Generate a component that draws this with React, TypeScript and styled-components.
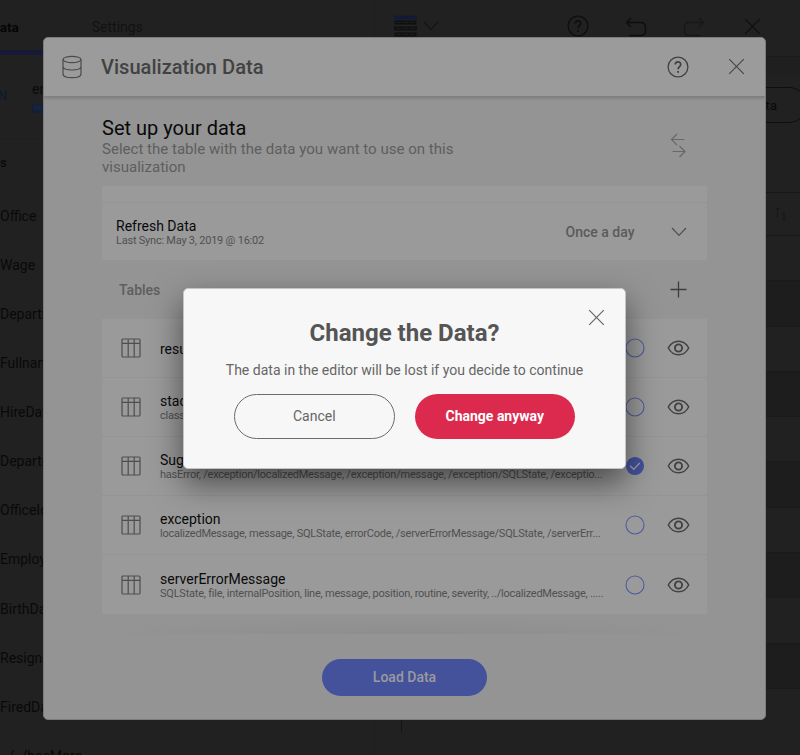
import React from "react";
import styled, { createGlobalStyle } from "styled-components";

const GlobalStyle = createGlobalStyle`
  * { box-sizing: border-box; }
  html, body { margin: 0; background: #212121; overflow: hidden; }
  body { font-family: Roboto, "Liberation Sans", sans-serif; }
  button { font-family: inherit; cursor: pointer; }
  svg { display: block; flex: none; }
`;

const Screen = styled.div`
  position: relative;
  width: 800px;
  height: 755px;
  overflow: hidden;
  display: flex;
  background: #212121;
  color: #090909;
`;

const FieldsPanel = styled.aside`
  width: 375px;
  flex: none;
  border-right: 1px solid #1e1e1e;
  overflow: hidden;
`;

const EditorTabs = styled.nav`
  display: flex;
  height: 55px;
`;

const EditorTab = styled.div<{ $active?: boolean }>`
  width: ${(p) => (p.$active ? 72 : 303)}px;
  padding: ${(p) => (p.$active ? "19px 0 0" : "19px 0 0 20px")};
  border-bottom: ${(p) => (p.$active ? "5px solid #161a36" : "0")};
  font-size: ${(p) => (p.$active ? 13.5 : 14)}px;
  line-height: 16px;
  font-weight: ${(p) => (p.$active ? 700 : 400)};
  color: ${(p) => (p.$active ? "#050505" : "#121212")};
`;

const TabText = styled.span<{ $shift: number }>`
  display: block;
  margin-left: ${(p) => p.$shift}px;
  white-space: nowrap;
`;

const SourceRow = styled.div`
  display: flex;
  height: 84px;
  padding-top: 26px;
  border-bottom: 1px solid #1e1e1e;
`;

const SourceType = styled.div`
  width: 32px;
  margin-left: -2px;
  padding-top: 7px;
  font-size: 13px;
  line-height: 16px;
  color: #0e1830;
`;

const SourceName = styled.div`
  margin-left: 2px;
  font-size: 14px;
  line-height: 16px;
`;

const SourceTag = styled.div`
  margin: 7px 0 0 2px;
  padding-left: 2px;
  width: 30px;
  height: 9px;
  border-radius: 1px;
  background: #121f38;
  color: #222c3e;
  font-size: 7px;
  line-height: 9px;
`;

const FieldsHeading = styled.div`
  height: 52px;
  padding-top: 15px;
  font-size: 13px;
  line-height: 18px;
  font-weight: 500;
`;

const Field = styled.div`
  height: 49.13px;
  display: flex;
  align-items: center;
  font-size: 14px;
  white-space: nowrap;
`;

const LastField = styled(Field)`
  align-items: flex-start;
  padding: 17px 0 0 1px;
  line-height: 16px;
`;

const Canvas = styled.section`
  flex: 1;
  display: flex;
  flex-direction: column;
`;

const CanvasToolbar = styled.header`
  display: flex;
  align-items: flex-start;
  height: 57px;
  padding: 15px 0 0 19px;
  border-bottom: 1px solid #1b1b1b;
`;

const ChevronSlot = styled.div`
  margin: 6px 0 0 6px;
`;

const ToolIcons = styled.div`
  display: flex;
  margin-left: 128px;
  gap: 36.2px;
`;

const ToolClose = styled.div`
  margin: 3px 0 0 2.500px;
`;

const TitleBand = styled.div`
  display: flex;
  justify-content: flex-end;
  height: 135px;
  padding-top: 30px;
  background: linear-gradient(#1f1f1f 19px, #212121 19px);
`;

const OutlinePill = styled.div`
  width: 120px;
  height: 36px;
  margin-right: -7px;
  padding-right: 29px;
  border: 1px solid #0e0e0e;
  border-radius: 18px;
  font-size: 13.5px;
  line-height: 35px;
  text-align: right;
`;

const GridHead = styled.div`
  display: flex;
  align-items: center;
  justify-content: flex-end;
  padding-right: 12px;
  height: 44px;
  border-top: 1px solid #171717;
  border-bottom: 1px solid #171717;
`;

const GridRow = styled.div<{ $dark: boolean }>`
  height: 45.3px;
  background: ${(p) => (p.$dark ? "#1d1d1d" : "#212121")};
  border-bottom: 1px solid #1a1a1a;
`;

const GridEnd = styled.div`
  width: 1px;
  height: 43px;
  margin-left: 26px;
  background: #151515;
`;

const DataDialog = styled.section`
  position: absolute;
  left: 43px;
  top: 37px;
  width: 723px;
  height: 683px;
  display: flex;
  flex-direction: column;
  overflow: hidden;
  background: #949494;
  border: 1px solid #7c7c7c;
  border-radius: 5px;
`;

const DialogHeader = styled.header`
  position: relative;
  display: flex;
  align-items: center;
  height: 59px;
  flex: none;
  padding: 0 20px 1px 17px;
  background: #9b9b9b;
  border-bottom: 1px solid #808080;
  box-shadow: 0 1px 3px rgba(0, 0, 0, 0.2);
`;

const DialogTitle = styled.h1`
  flex: 1;
  margin: 0 0 0 18px;
  font-size: 20.1px;
  line-height: 24px;
  font-weight: 500;
  color: #424242;
`;

const HeaderActions = styled.div`
  display: flex;
  align-items: center;
  gap: 39px;
`;

const DialogBody = styled.div`
  flex: 1;
  padding: 19px 58px 0;
`;

const Intro = styled.div`
  display: flex;
  justify-content: space-between;
  height: 70px;
`;

const IntroHeading = styled.h2`
  margin: 0;
  font-size: 20px;
  line-height: 24px;
  font-weight: 400;
  color: #0a0a0a;
`;

const IntroText = styled.p`
  margin: 0;
  width: 380px;
  font-size: 15.05px;
  line-height: 18px;
  color: #5e5e5e;
`;

const SwapSlot = styled.div`
  padding: 17px 21px 0 0;
`;

const Card = styled.div`
  background: #9a9a9a;
`;

const CardStub = styled.div`
  height: 17px;
  border-bottom: 1px solid #949494;
`;

const RefreshRow = styled.div`
  display: flex;
  align-items: center;
  height: 57px;
  padding: 0 20px 0 14px;
`;

const Labels = styled.div`
  flex: 1;
  min-width: 0;
  padding-top: 2px;
`;

const ItemName = styled.div`
  font-size: 14px;
  line-height: 16px;
  color: #0a0a0a;
`;

const ItemDetail = styled.div`
  font-size: 11px;
  line-height: 14px;
  letter-spacing: -0.23px;
  color: #505050;
  white-space: nowrap;
`;

const Frequency = styled.div`
  margin-right: 36.5px;
  font-size: 14px;
  font-weight: 500;
  color: #5a5a5a;
`;

const SectionBar = styled.div`
  display: flex;
  align-items: center;
  justify-content: space-between;
  height: 59px;
  padding: 0 20px 0 17px;
  font-size: 14px;
  font-weight: 500;
  color: #5e5e5e;
`;

const TableRow = styled.div`
  display: flex;
  align-items: center;
  height: 59.1px;
  padding: 0 17.5px 0 19px;
  border-bottom: 1px solid #949494;
  &:last-child { border-bottom: 0; }
`;

const TableLabels = styled(Labels)<{ $single: boolean }>`
  margin-left: 19px;
  padding-top: ${(p) => (p.$single ? 1 : 2)}px;
`;

const RowActions = styled.div`
  display: flex;
  align-items: center;
  gap: 22px;
`;

const DialogFooter = styled.footer`
  display: flex;
  justify-content: center;
  height: 103px;
  flex: none;
  padding-top: 43px;
  background: radial-gradient(ellipse 46% 100% at 50% 100%, #8e8e8e, #949494) 0 0 / 100% 18px no-repeat;
`;

const PillButton = styled.button<{ $kind: "load" | "cancel" | "danger" }>`
  width: ${(p) => (p.$kind === "load" ? 164.5 : 160.5)}px;
  height: ${(p) => (p.$kind === "load" ? 36.5 : 44.5)}px;
  padding: 0;
  border: ${(p) => (p.$kind === "cancel" ? "1.5px solid #6c6c6c" : "0")};
  border-radius: 23px;
  background: ${(p) => ({ load: "#44529c", cancel: "transparent", danger: "#dc2a4e" })[p.$kind]};
  color: ${(p) => ({ load: "#9b9b9b", cancel: "#666", danger: "#fff" })[p.$kind]};
  font-size: 14px;
  font-weight: ${(p) => ({ load: 500, cancel: 400, danger: 700 })[p.$kind]};
`;

const ConfirmDialog = styled.section`
  position: absolute;
  left: 183px;
  top: 288px;
  width: 443px;
  height: 181px;
  padding: 20px 20px 0;
  background: #f7f7f7;
  border: 1px solid #c4c4c4;
  border-radius: 5px;
  box-shadow: 0 14px 32px rgba(0, 0, 0, 0.52);
`;

const CloseLine = styled.div`
  display: flex;
  justify-content: flex-end;
  height: 9px;
`;

const ConfirmTitle = styled.h2`
  margin: 0;
  font-size: 24px;
  line-height: 30px;
  font-weight: 700;
  text-align: center;
  color: #555;
`;

const ConfirmText = styled.p`
  margin: 13px 0 0;
  font-size: 14.03px;
  line-height: 19px;
  text-align: center;
  color: #666;
`;

const ConfirmActions = styled.div`
  display: flex;
  justify-content: center;
  gap: 20px;
  margin-top: 14px;
`;

const Cross = ({ color }: { color: string }) => (
  <svg width="17" height="17" viewBox="0 0 17 17" stroke={color} strokeWidth="1.2">
    <path d="M1.200 1.200l14.600 14.600M15.800 1.200L1.200 15.800" />
  </svg>
);

const Help = ({ color }: { color: string }) => (
  <svg width="22" height="22" viewBox="0 0 22 22" fill="none" stroke={color} strokeWidth="1.3">
    <circle cx="11" cy="11" r="9.900" />
    <path d="M8.300 8.600c0-3.700 5.400-3.600 5.400-.2 0 2.200-2.600 2.400-2.600 4.800" strokeWidth="1.700" />
    <path d="M11.100 15v1.800" strokeWidth="1.800" />
  </svg>
);

const Database = () => (
  <svg width="22" height="24" viewBox="0 0 22 24" fill="none" stroke="#4b4b4b" strokeWidth="1.200">
    <ellipse cx="11" cy="4.500" rx="9" ry="3.200" />
    <path d="M2 4.500v14.500c0 2.800 2.500 3.700 9 3.700s9-.9 9-3.700V4.500M2 11.500c0 2.700 3.600 3.500 9 3.500s9-.8 9-3.500" />
  </svg>
);

const Chevron = ({ color }: { color: string }) => (
  <svg width="16" height="10" viewBox="0 0 16 10" fill="none" stroke={color} strokeWidth="1.200">
    <path d="M1 1l7 7.300L15 1" />
  </svg>
);

const Swap = () => (
  <svg width="16" height="25" viewBox="0 0 16 25" fill="none" stroke="#686868" strokeWidth="1.200">
    <path d="M14.500 6.500H1.500M7 1L1.500 6.500 7 12M2.500 18.500h12.500M9.500 13l5.500 5.500L9.500 24" />
  </svg>
);

const Plus = () => (
  <svg width="17" height="17" viewBox="0 0 17 17" stroke="#3d3d3d" strokeWidth="1.300">
    <path d="M8.500 .5v16M.5 8.500h16" />
  </svg>
);

const TableGlyph = () => (
  <svg width="20" height="20" viewBox="0 0 20 20" fill="none" stroke="#4e4e4e" strokeWidth="1.200">
    <rect x="1" y="1" width="18" height="18" rx="1" />
    <path d="M1 5.300h18M7.200 1v18M13.200 1v18" />
  </svg>
);

const Eye = () => (
  <svg width="23" height="18" viewBox="0 0 23 18" fill="none" stroke="#424242" strokeWidth="1.500">
    <path d="M1.300 9C6.200-.1 16.800-.1 21.700 9c-4.900 9.100-15.500 9.100-20.400 0z" />
    <circle cx="11.500" cy="9" r="3.600" strokeWidth="1.900" />
  </svg>
);

const Radio = ({ checked }: { checked?: boolean }) => (
  <svg width="20" height="20" viewBox="0 0 20 20" fill="none">
    <circle cx="10" cy="10" r={checked ? 8.500 : 9} stroke={checked ? "#44529c" : "#4f5c9d"} strokeWidth="1.100" fill={checked ? "#44529c" : "none"} />
    {checked && <path d="M5 9.800l3.700 3.500 6-6.300" stroke="#a5a5a5" strokeWidth="1.200" />}
  </svg>
);

const GridGlyph = () => (
  <svg width="23" height="23" viewBox="0 0 23 23">
    <path d="M0 2.500h23" stroke="#111a3a" strokeWidth="3.500" />
    <path d="M.5 7.500h22M0 13.500h23M.5 19.500h22" stroke="#101010" strokeWidth="4" />
    <path d="M2 7.500h19M2 13.500h19M2 19.500h19" stroke="#1d1d1d" strokeDasharray="5 2" />
  </svg>
);

const Undo = ({ color, flip }: { color: string; flip?: boolean }) => (
  <svg width="22" height="22" viewBox="0 0 22 22" fill="none" stroke={color} strokeWidth="1.500">
    <path
      transform={flip ? "translate(22 0) scale(-1 1)" : undefined}
      d="M6 3L1.500 7.500 6 12M1.500 7.500h14q5 0 5 5v3q0 5-5 5H4.500"
    />
  </svg>
);

const SortArrows = () => (
  <svg width="14" height="18" viewBox="0 0 14 18" fill="none" stroke="#171717">
    <path d="M3.500 12V2.500M1.500 4.500L3.500 2.500 5.500 4.500M10 6.500v9M8 13.500l2 2 2-2" />
  </svg>
);

const fields = [
  "Office", "Wage", "Department", "Fullname", "HireDate", "Department",
  "OfficeId", "EmployeeId", "BirthDate", "Resigned", "FiredDate",
];

const tables = [
  { name: "result", detail: "" },
  { name: "stackTrace", detail: "className" },
  { name: "Suggested", detail: "hasError, /exception/localizedMessage, /exception/message, /exception/SQLState, /exceptio...", checked: true },
  { name: "exception", detail: "localizedMessage, message, SQLState, errorCode, /serverErrorMessage/SQLState, /serverErr..." },
  { name: "serverErrorMessage", detail: "SQLState, file, internalPosition, line, message, position, routine, severity, ../localizedMessage, ....." },
];

const Editor = () => (
  <>
    <FieldsPanel>
      <EditorTabs>
        <EditorTab $active><TabText $shift={-9}>Data</TabText></EditorTab>
        <EditorTab><TabText $shift={0}>Settings</TabText></EditorTab>
      </EditorTabs>
      <SourceRow>
        <SourceType>N</SourceType>
        <div>
          <SourceName>employees</SourceName>
          <SourceTag>REST</SourceTag>
        </div>
      </SourceRow>
      <FieldsHeading>s</FieldsHeading>
      {fields.map((name, i) => <Field key={i}>{name}</Field>)}
      <LastField>../../hasMore</LastField>
    </FieldsPanel>
    <Canvas>
      <CanvasToolbar>
        <GridGlyph />
        <ChevronSlot><Chevron color="#131313" /></ChevronSlot>
        <ToolIcons>
          <Help color="#0e0e0e" />
          <Undo color="#0e0e0e" />
          <Undo color="#181818" flip />
          <ToolClose><Cross color="#0e0e0e" /></ToolClose>
        </ToolIcons>
      </CanvasToolbar>
      <TitleBand><OutlinePill>Edit data</OutlinePill></TitleBand>
      <GridHead><SortArrows /></GridHead>
      {Array.from({ length: 10 }, (_, i) => <GridRow key={i} $dark={i % 2 === 1} />)}
      <GridEnd />
    </Canvas>
  </>
);

export default function App() {
  return (
    <>
      <GlobalStyle />
      <Screen>
        <Editor />
        <DataDialog>
          <DialogHeader>
            <Database />
            <DialogTitle>Visualization Data</DialogTitle>
            <HeaderActions>
              <Help color="#404040" />
              <Cross color="#484848" />
            </HeaderActions>
          </DialogHeader>
          <DialogBody>
            <Intro>
              <div>
                <IntroHeading>Set up your data</IntroHeading>
                <IntroText>Select the table with the data you want to use on this visualization</IntroText>
              </div>
              <SwapSlot><Swap /></SwapSlot>
            </Intro>
            <Card>
              <CardStub />
              <RefreshRow>
                <Labels>
                  <ItemName>Refresh Data</ItemName>
                  <ItemDetail>Last Sync: May 3, 2019 @ 16:02</ItemDetail>
                </Labels>
                <Frequency>Once a day</Frequency>
                <Chevron color="#505050" />
              </RefreshRow>
            </Card>
            <SectionBar>Tables<Plus /></SectionBar>
            <Card>
              {tables.map((t) => (
                <TableRow key={t.name}>
                  <TableGlyph />
                  <TableLabels $single={!t.detail}>
                    <ItemName>{t.name}</ItemName>
                    {t.detail && <ItemDetail>{t.detail}</ItemDetail>}
                  </TableLabels>
                  <RowActions>
                    <Radio checked={t.checked} />
                    <Eye />
                  </RowActions>
                </TableRow>
              ))}
            </Card>
          </DialogBody>
          <DialogFooter><PillButton $kind="load">Load Data</PillButton></DialogFooter>
        </DataDialog>
        <ConfirmDialog>
          <CloseLine><Cross color="#666" /></CloseLine>
          <ConfirmTitle>Change the Data?</ConfirmTitle>
          <ConfirmText>The data in the editor will be lost if you decide to continue</ConfirmText>
          <ConfirmActions>
            <PillButton $kind="cancel">Cancel</PillButton>
            <PillButton $kind="danger">Change anyway</PillButton>
          </ConfirmActions>
        </ConfirmDialog>
      </Screen>
    </>
  );
}
